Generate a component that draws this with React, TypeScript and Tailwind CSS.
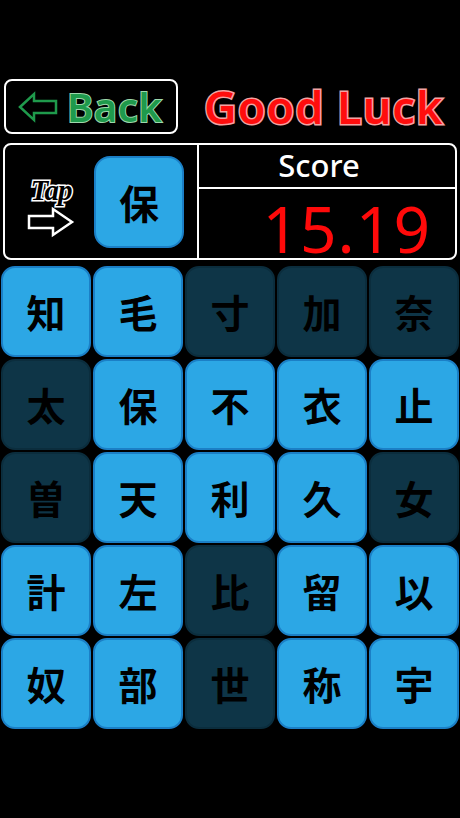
const rows: [string, boolean][][] = [
  [['知', true], ['毛', true], ['寸', false], ['加', false], ['奈', false]],
  [['太', false], ['保', true], ['不', true], ['衣', true], ['止', true]],
  [['曽', false], ['天', true], ['利', true], ['久', true], ['女', false]],
  [['計', true], ['左', true], ['比', false], ['留', true], ['以', true]],
  [['奴', true], ['部', true], ['世', false], ['称', true], ['宇', true]],
];

const kanjiFont = "[font-family:'Noto_Sans_CJK_JP',sans-serif]";

function Tile({ ch, lit }: { ch: string; lit: boolean }) {
  return (
    <div
      className={
        lit
          ? `h-[91px] rounded-[14px] border-2 border-[#1b7fc6] bg-[#2ca7e5] flex items-center justify-center text-[39px] font-bold text-black ${kanjiFont}`
          : `h-[91px] rounded-[14px] border-2 border-[#0b2d3d] bg-[#0e3547] flex items-center justify-center text-[39px] font-bold text-black ${kanjiFont}`
      }
    >
      {ch}
    </div>
  );
}

function TapIcon() {
  return (
    <div className="flex flex-col items-center w-[56px]">
      <span className="text-[29px] leading-none italic font-bold text-black [font-family:'Liberation_Serif',serif] [-webkit-text-stroke:3px_#ffffff] [paint-order:stroke_fill] tracking-[-1px]">
        Tap
      </span>
      <svg width="50" height="32" viewBox="0 0 50 32" className="mt-[1px]">
        <path d="M3 10 H27 V3 L46 16 L27 29 V22 H3 Z" fill="black" stroke="white" strokeWidth="2.5" strokeLinejoin="miter" />
      </svg>
    </div>
  );
}

export default function App() {
  return (
    <div className="w-[460px] h-[818px] bg-black overflow-hidden pt-[79px] [font-family:'Noto_Sans',sans-serif]">
      <div className="flex items-center">
        <div className="ml-[4px] w-[174px] h-[55px] border-2 border-white rounded-[8px] flex items-center pl-[11px]">
          <svg width="42" height="32" viewBox="0 0 42 32">
            <path d="M3 16 L17 3 V10 H39 V22 H17 V29 Z" fill="none" stroke="#1f9a4c" strokeWidth="2.5" strokeLinejoin="miter" />
          </svg>
          <span className="ml-[8px] text-[40px] leading-none font-semibold text-[#1f9a4c] [-webkit-text-stroke:2px_#9ed8ad] [paint-order:stroke_fill] tracking-[0.5px]">
            Back
          </span>
        </div>
        <span className="ml-[26px] text-[45px] leading-none font-semibold text-[#ff0d0d] [-webkit-text-stroke:3px_#f2a3a3] [paint-order:stroke_fill] whitespace-nowrap tracking-[1px]">
          Good Luck
        </span>
      </div>

      <div className="mt-[9px] mx-[3px] h-[117px] border-2 border-white rounded-[8px] flex">
        <div className="w-[194px] border-r-2 border-white flex items-center">
          <div className="ml-[18px] mt-[10px]">
            <TapIcon />
          </div>
          <div className={`ml-[15px] w-[90px] h-[92px] rounded-[16px] border-2 border-[#1b7fc6] bg-[#2ca7e5] flex items-center justify-center text-[40px] font-bold text-black ${kanjiFont}`}>
            保
          </div>
        </div>
        <div className="flex-1 flex flex-col">
          <div className="h-[44px] border-b-2 border-white flex items-center justify-center pr-[16px] pb-[2px]">
            <span className="text-[31px] leading-none font-medium text-white">Score</span>
          </div>
          <div className="flex-1 flex items-center justify-end pr-[24px] pt-[10px]">
            <span className="text-[64px] leading-[56px] text-[#ff0a0a] tracking-[1px]">15.19</span>
          </div>
        </div>
      </div>

      <div className="mt-[6px] px-[1px] grid grid-cols-5 gap-[2px]">
        {rows.flat().map(([ch, lit], i) => (
          <Tile key={i} ch={ch} lit={lit} />
        ))}
      </div>
    </div>
  );
}
